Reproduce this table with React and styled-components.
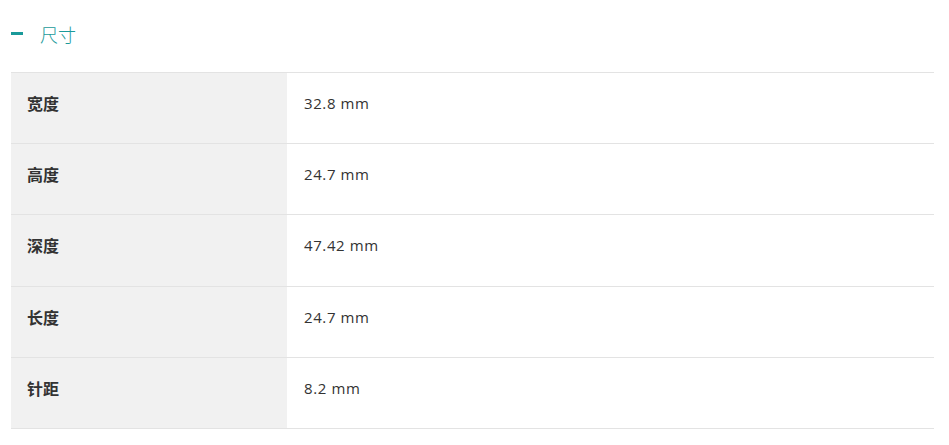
import React from 'react';
import styled, { createGlobalStyle } from 'styled-components';

const GlobalStyle = createGlobalStyle`
  body {
    margin: 0;
    background: #ffffff;
    font-family: "Open Sans", "Noto Sans CJK SC", sans-serif;
  }
`;

const Wrapper = styled.div`
  padding: 0 15px 0 11px;
`;

const Header = styled.div`
  display: flex;
  align-items: center;
  height: 72px;
  padding-bottom: 5px;
  box-sizing: border-box;
`;

const Dash = styled.span`
  width: 12px;
  height: 3px;
  background: #1a9a9a;
  margin-right: 17px;
`;

const Title = styled.span`
  font-size: 18px;
  color: #1a9a9a;
  font-family: "Noto Sans CJK SC", sans-serif;
  font-weight: 300;
`;

const Table = styled.div`
  border-top: 1px solid #e3e3e3;
`;

const Row = styled.div`
  display: grid;
  grid-template-columns: 276px 1fr;
  height: 71.2px;
  box-sizing: border-box;
  border-bottom: 1px solid #e3e3e3;
`;

const Cell = styled.div`
  display: flex;
  align-items: center;
  padding-bottom: 10px;
  color: #333333;
`;

const Label = styled(Cell)`
  padding-left: 16px;
  background: #f1f1f1;
  font-family: "Noto Sans CJK SC", sans-serif;
  font-size: 16px;
  font-weight: 700;
`;

const Value = styled(Cell)`
  padding-left: 17px;
  font-size: 15px;
  letter-spacing: 0.6px;
`;

const specs = [
  { label: '宽度', value: '32.8 mm' },
  { label: '高度', value: '24.7 mm' },
  { label: '深度', value: '47.42 mm' },
  { label: '长度', value: '24.7 mm' },
  { label: '针距', value: '8.2 mm' },
];

function App() {
  return (
    <>
      <GlobalStyle />
      <Wrapper>
        <Header>
          <Dash />
          <Title>尺寸</Title>
        </Header>
        <Table>
          {specs.map((s) => (
            <Row key={s.label}>
              <Label>{s.label}</Label>
              <Value>{s.value}</Value>
            </Row>
          ))}
        </Table>
      </Wrapper>
    </>
  );
}

export default App;
